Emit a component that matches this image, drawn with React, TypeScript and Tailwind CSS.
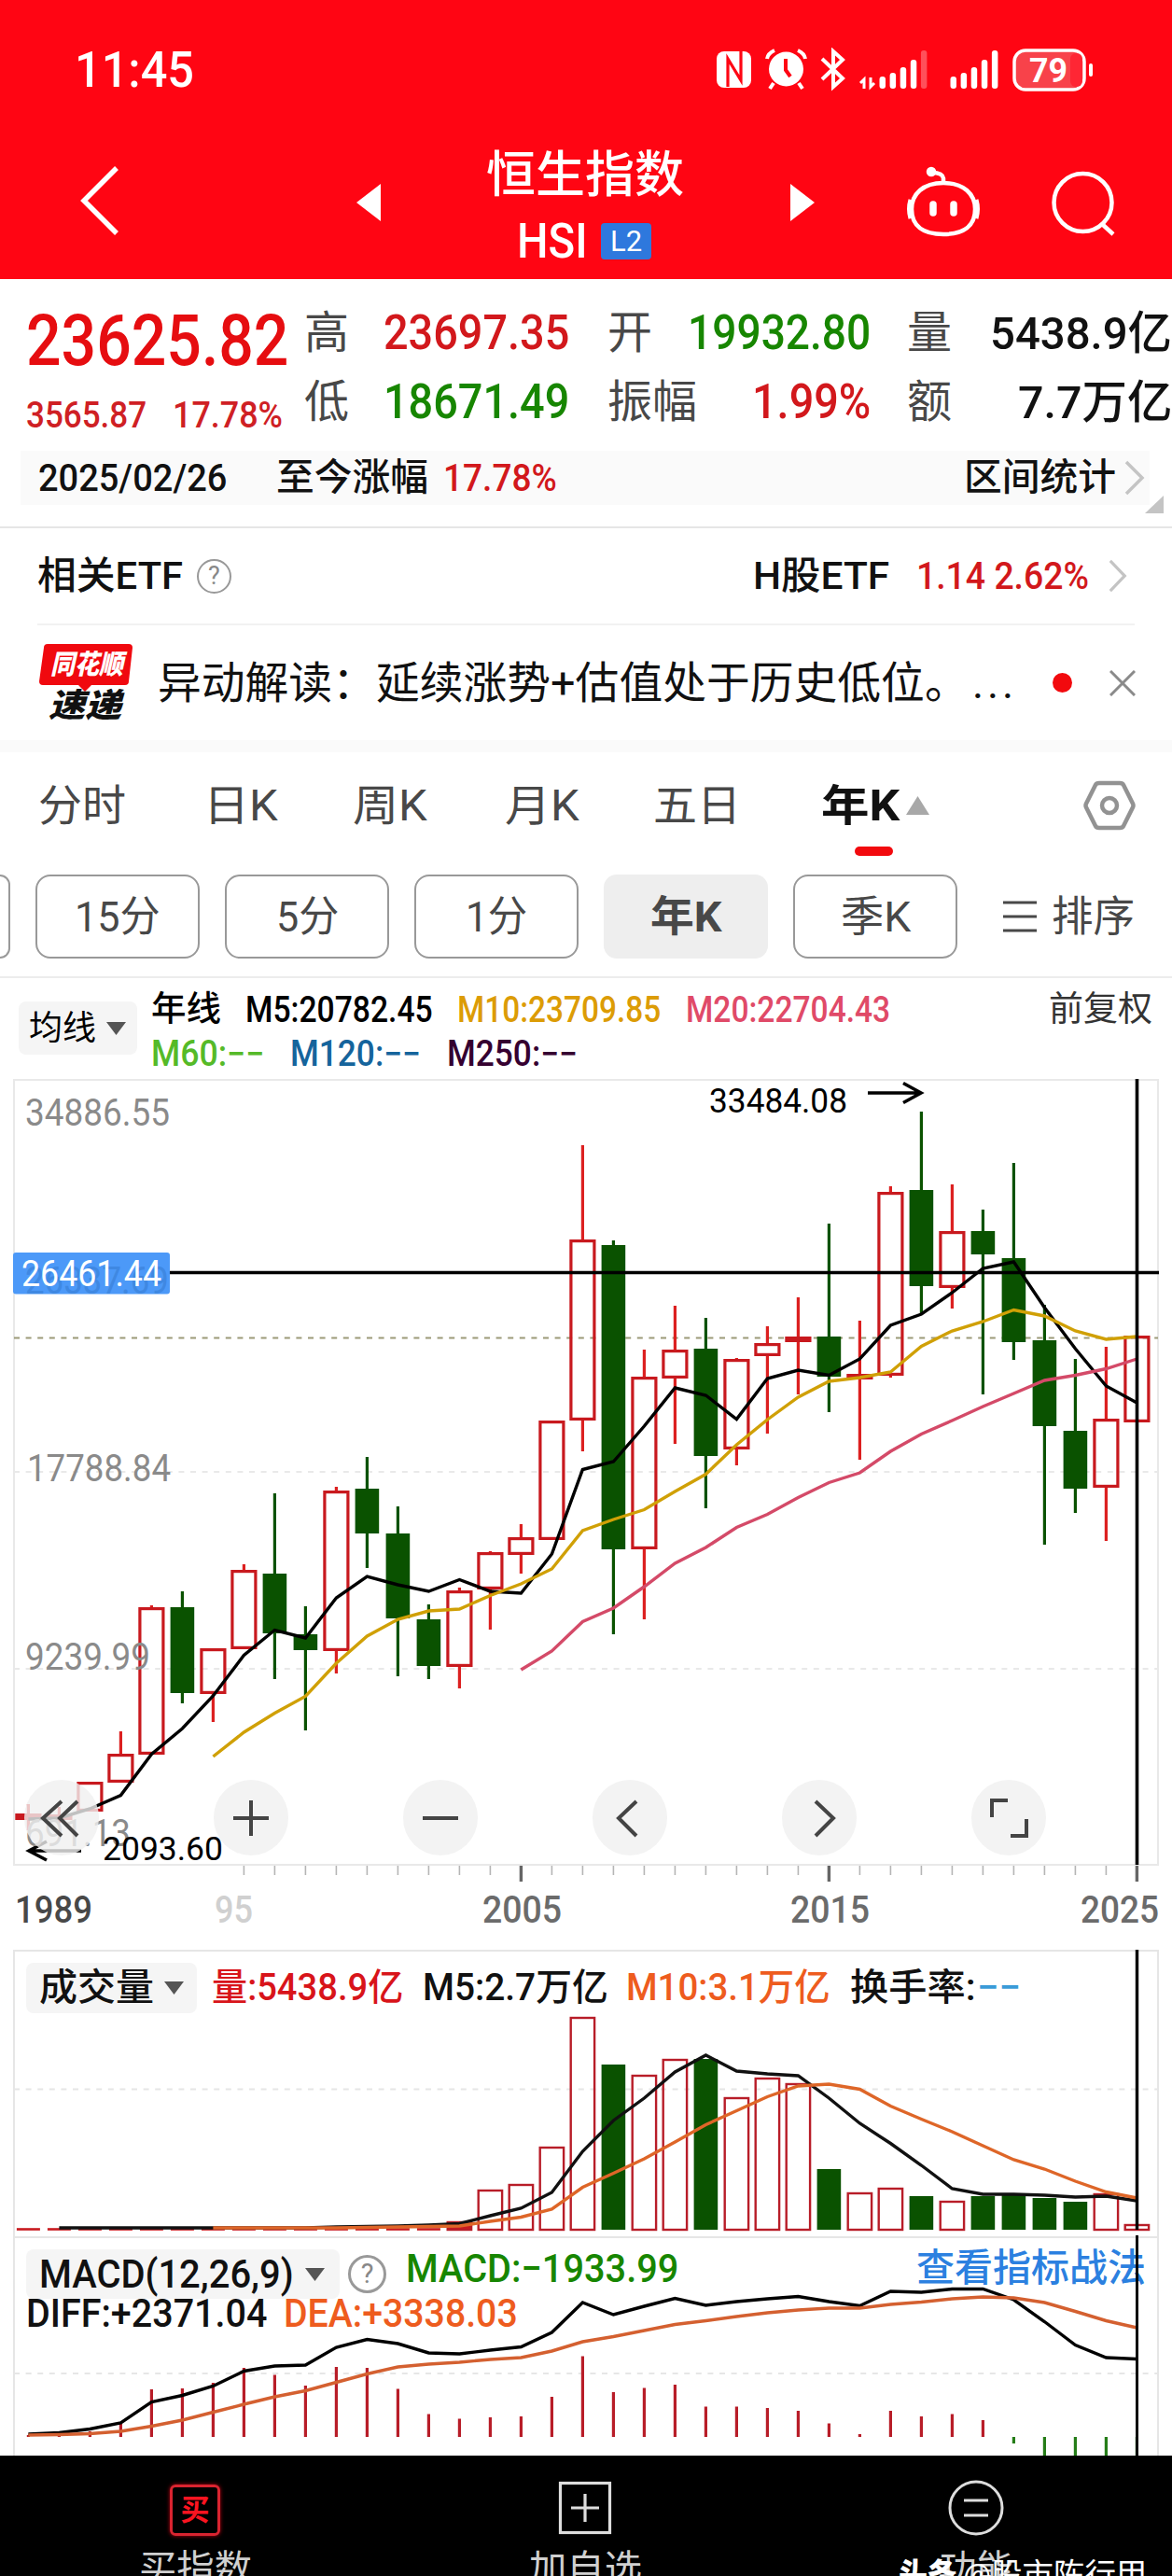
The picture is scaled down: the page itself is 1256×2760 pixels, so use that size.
import React, { useLayoutEffect, useRef, useState } from 'react';

// Texto ajustado a un ancho fijo (cifras estrechas)
const Fit: React.FC<{ w: number; className?: string; children: React.ReactNode }> = ({ w, className = '', children }) => {
  const ref = useRef<HTMLSpanElement>(null);
  const [scale, setScale] = useState(1);

  useLayoutEffect(() => {
    if (ref.current) setScale(w / ref.current.offsetWidth);
  }, [w, children]);

  return (
    <span className={`inline-block shrink-0 whitespace-nowrap leading-none ${className}`} style={{ width: w }}>
      <span ref={ref} className="inline-block origin-left" style={{ transform: `scaleX(${scale})` }}>
        {children}
      </span>
    </span>
  );
};

interface LabelProps {
  x: number;
  y: number;
  w: number;
  size: number;
  fill?: string;
  children: string;
}

// Texto dentro de los gráficos; y es el centro de las cifras
const Label: React.FC<LabelProps> = ({ x, y, w, size, fill = '#8a8a8a', children }) => (
  <text x={x} y={y + size * 0.356} fontSize={size} fill={fill} textLength={w} lengthAdjust="spacingAndGlyphs">
    {children}
  </text>
);

const RED = '#c8191e';
const GREEN = '#0a5200';

const cx = (i: number) => 30.4 + i * 33;
const line = (start: number, ys: number[]) => ys.map((y, i) => `${cx(start + i)},${y}`).join(' ');

// [alcista, máximo, techo, suelo, mínimo]
const candles: [number, number, number, number, number][] = [
  [1, 1933, 1943, 1950, 1961], [1, 1936, 1944, 1950, 1953], [1, 1909, 1909, 1941, 1941],
  [1, 1855, 1879, 1910, 1910], [1, 1720, 1722, 1880, 1880], [0, 1705, 1722, 1814, 1825],
  [1, 1766, 1766, 1815, 1845], [1, 1676, 1682, 1767, 1767], [0, 1600, 1686, 1750, 1799],
  [0, 1721, 1751, 1768, 1854], [1, 1593, 1597, 1769, 1793], [0, 1561, 1595, 1643, 1680],
  [0, 1614, 1643, 1734, 1796], [0, 1719, 1735, 1785, 1799], [1, 1701, 1704, 1786, 1809],
  [1, 1662, 1663, 1703, 1746], [1, 1633, 1647, 1666, 1686], [1, 1522, 1522, 1650, 1650],
  [1, 1227, 1328, 1522, 1555], [0, 1329, 1334, 1660, 1751], [1, 1446, 1475, 1660, 1735],
  [1, 1399, 1446, 1477, 1547], [0, 1412, 1445, 1560, 1616], [1, 1455, 1456, 1553, 1570],
  [1, 1421, 1439, 1453, 1536], [1, 1390, 1432, 1438, 1494], [0, 1311, 1432, 1475, 1513],
  [1, 1415, 1472, 1478, 1564], [1, 1271, 1277, 1474, 1476], [0, 1191, 1275, 1378, 1408],
  [1, 1269, 1319, 1380, 1402], [0, 1296, 1319, 1344, 1494], [0, 1246, 1348, 1438, 1457],
  [0, 1398, 1436, 1528, 1655], [0, 1456, 1533, 1595, 1621], [1, 1443, 1520, 1594, 1651],
  [1, 1431, 1431, 1524, 1524],
];

const m5 = [
  1949, 1948, 1938, 1923.5, 1879.5, 1852, 1817, 1773.5, 1746.5, 1755, 1712, 1689, 1698, 1705, 1692.5, 1705, 1707, 1665,
  1574.5, 1566, 1528, 1487, 1495, 1520.5, 1477, 1468, 1473.5, 1456, 1420, 1408, 1385, 1359, 1352, 1401, 1445, 1485, 1503,
];
const m10 = [
  1882, 1856, 1835.5, 1817.5, 1782, 1753, 1735, 1726, 1724, 1709.5, 1697, 1681, 1640, 1628, 1617.5, 1598, 1579.5, 1548, 1521,
  1497, 1480, 1476, 1470, 1442.5, 1426, 1416, 1403.5, 1410, 1426, 1435, 1432,
];
const m20 = [
  1789, 1769, 1737.5, 1723, 1700, 1675, 1658, 1636.5, 1622.5, 1604.5, 1588.5, 1578, 1555, 1536.5, 1522, 1507, 1493, 1479,
  1473.5, 1466.5, 1456,
];

// [alcista, altura]
const volumes: [number, number][] = [
  [1, 2380], [1, 2346], [1, 2340], [1, 2300], [1, 2161], [0, 2212], [1, 2223], [1, 2206], [0, 2206], [1, 2247],
  [1, 2226], [1, 2232], [0, 2324], [1, 2349], [1, 2344], [0, 2353], [1, 2358], [0, 2353], [0, 2352], [0, 2355],
  [0, 2359], [1, 2350], [1, 2383],
];
const vol5 = [
  2387, 2387, 2387, 2387, 2387, 2387, 2387, 2387, 2387, 2386, 2385.5, 2385, 2384, 2382.5, 2374, 2366, 2349, 2305, 2272,
  2248, 2220, 2202, 2219, 2222, 2224, 2248, 2275, 2296.5, 2320, 2345, 2351, 2351, 2352, 2354, 2353, 2358,
];
const vol10 = [
  2387, 2387, 2387, 2387, 2387, 2386.5, 2386, 2385.5, 2385, 2380, 2375.5, 2367, 2343.5, 2328.5, 2313, 2295, 2276.5, 2261.5,
  2246.5, 2235, 2233, 2238.5, 2256.5, 2270.5, 2284, 2299, 2314, 2324, 2337, 2348.5, 2355,
];

const macd = [
  2609, 2608, 2605, 2597, 2560, 2559, 2553, 2537, 2544.5, 2556, 2536, 2537, 2559.5, 2586.5, 2591.5, 2590, 2589, 2568, 2524.5,
  2563, 2558.5, 2555, 2578.5, 2578.5, 2580, 2583, 2596.5, 2608, 2583, 2589, 2586.5, 2593, 2618, 2640, 2640, 2640, 2640,
];
const diff = [
  2608, 2606.5, 2602.5, 2596, 2573.5, 2566.5, 2556.5, 2540.5, 2535, 2534, 2515, 2506.5, 2511, 2521, 2522, 2518, 2514.5, 2499,
  2467, 2480, 2471, 2462.5, 2470, 2466, 2463, 2460.5, 2466, 2470.5, 2455, 2456, 2452.5, 2452.5, 2464, 2487.5, 2512.5, 2526, 2527.5,
];
const dea = [
  2609, 2608.5, 2607.5, 2605, 2599.5, 2593, 2584.5, 2576, 2568, 2561.5, 2552.5, 2543.5, 2536, 2533, 2531, 2528, 2526, 2519,
  2509, 2503.5, 2497, 2490.5, 2486.5, 2482, 2478, 2475, 2473, 2473, 2469, 2466.5, 2463, 2461, 2462, 2467, 2476.5, 2486.5, 2494,
];

const StatusIcons = () => (
  <svg className="ml-auto mr-[82px] h-[48px] w-[408px]" viewBox="766 50 408 48" fill="#fff">
    {/* NFC */}
    <rect x="768" y="54" width="37" height="39" rx="8" />
    <path d="M780 92V62l14 23V54" fill="none" stroke="#ff0513" strokeWidth="3.200" />
    {/* alarma */}
    <circle cx="842.500" cy="73" r="18.500" />
    <path d="M822 62q1-6 8-9M863 62q-1-6-8-9M829 88l-4 6M856 88l4 6" stroke="#fff" strokeWidth="4" fill="none" />
    <path d="M842 62v12l5 7" stroke="#ff0513" strokeWidth="4" fill="none" />
    {/* bluetooth */}
    <path d="M881 62l22 21-10 9V54l10 9-22 21" fill="none" stroke="#fff" strokeWidth="4" />
    <path d="M926 94V84l-4 4M933 82v10l4-4" fill="none" stroke="#fff" strokeWidth="3" />
    {[0, 1].map((s) =>
      [81, 77, 71, 63, 53].map((y, i) => (
        <rect key={`${s}${i}`} x={942.5 + s * 76 + i * 11.1} y={y} width="6.5" height={94 - y} rx="3" opacity={s === 0 && i === 4 ? 0.3 : 1} />
      ))
    )}
    <rect x="1087" y="53" width="75" height="42" rx="12" fill="#f8424a" stroke="#fff" strokeWidth="3.500" />
    <rect x="1147" y="56" width="13" height="36" rx="6" fill="#ff2634" />
    <rect x="1167" y="67" width="4" height="14" rx="2" />
    <text x="1103" y="87" fontSize="37" fontWeight="700" textLength="41" lengthAdjust="spacingAndGlyphs">79</text>
  </svg>
);

const Header = () => (
  <header className="h-[299px] bg-[#ff0513] text-white">
    <div className="flex h-[150px] items-center pl-[80px]">
      <Fit w={128} className="text-[54px] font-medium">11:45</Fit>
      <StatusIcons />
    </div>
    <div className="flex h-[149px] items-start pl-[86px]">
      <svg className="mt-[27px] h-[76px] w-[44px]" viewBox="0 0 44 76" fill="none" stroke="#fff" strokeWidth="5.500">
        <path d="M39 3L4 38l35 35" />
      </svg>
      <svg className="ml-[252px] mt-[47px] h-[40px] w-[26px]" viewBox="0 0 26 40" fill="#fff">
        <path d="M26 0v40L0 20z" />
      </svg>
      <div className="ml-[112px] flex w-[214px] flex-col items-center">
        <Fit w={212} className="mt-[12px] text-[53px] font-medium">恒生指数</Fit>
        <div className="mt-[18px] flex w-[214px] items-center pl-[34px]">
          <Fit w={76} className="text-[51px] font-medium">HSI</Fit>
          <span className="ml-[14px] flex h-[39px] w-[54px] items-center justify-center rounded bg-[#2e78dd] text-[31px] leading-none">L2</span>
        </div>
      </div>
      <svg className="ml-[113px] mt-[47px] h-[40px] w-[26px]" viewBox="0 0 26 40" fill="#fff">
        <path d="M0 0v40l26-20z" />
      </svg>
      <svg className="ml-[97px] mt-[28px] h-[78px] w-[82px]" viewBox="970 178 82 78" fill="none" stroke="#fff" strokeWidth="4.500">
        <path d="M1011 196c-22 0-34 12-34 28 0 18 12 27 34 27s34-9 34-27c0-16-12-28-34-28z" />
        <path d="M1011 196v-5q-1-6-12-6" />
        <circle cx="998" cy="184" r="3" fill="#fff" />
        <path d="M976 214q-3 10 0 20M1046 214q3 10 0 20" strokeWidth="5" />
        <path d="M1000 219v9M1022 219v9" strokeWidth="7.500" strokeLinecap="round" />
      </svg>
      <svg className="ml-[74px] mt-[31px] h-[74px] w-[72px]" viewBox="1126 180 72 74" fill="none" stroke="#fff" strokeWidth="4.500">
        <circle cx="1160.500" cy="216" r="31" />
        <path d="M1181 239l12 11" />
      </svg>
    </div>
  </header>
);

interface CellProps {
  label: string;
  value: string;
  w: number;
  color: string;
}

const Cell: React.FC<CellProps> = ({ label, value, w, color }) => (
  <div className="flex h-[74px] items-center justify-between">
    <span className="text-[48px] leading-none text-[#484848]">{label}</span>
    <Fit w={w} className={`font-medium ${color}`}>{value}</Fit>
  </div>
);

const Quote = () => (
  <section className="flex h-[184px]">
    <div className="w-[326px] pl-[28px]">
      <div className="flex h-[132px] items-center">
        <Fit w={281} className="text-[76px] font-medium text-[#e60d10]">23625.82</Fit>
      </div>
      <div className="flex h-[28px] items-center text-[38px] font-medium text-[#cf2024]">
        <Fit w={129}>3565.87</Fit>
        <Fit w={118} className="ml-[28px]">17.78%</Fit>
      </div>
    </div>
    <div className="w-[284px] pt-[21px] text-[52px]">
      <Cell label="高" value="23697.35" w={199} color="text-[#d2181c]" />
      <Cell label="低" value="18671.49" w={199} color="text-[#178600]" />
    </div>
    <div className="ml-[41px] w-[282px] pt-[21px] text-[52px]">
      <Cell label="开" value="19932.80" w={196} color="text-[#178600]" />
      <Cell label="振幅" value="1.99%" w={127} color="text-[#d2181c]" />
    </div>
    <div className="ml-[39px] w-[284px] pt-[21px] text-[49px]">
      <Cell label="量" value="5438.9亿" w={195} color="text-[#111]" />
      <Cell label="额" value="7.7万亿" w={165} color="text-[#111]" />
    </div>
  </section>
);

const Chevron = ({ className }: { className: string }) => (
  <svg className={className} viewBox="0 0 22 38" fill="none" stroke="#c4c4c4" strokeWidth="3.500" preserveAspectRatio="none">
    <path d="M2 2l17 17L2 36" />
  </svg>
);

const Help = ({ className }: { className: string }) => (
  <span className={`flex items-center justify-center rounded-full border-[#999] leading-none text-[#888] ${className}`}>?</span>
);

const Info = () => (
  <>
    <section className="relative flex h-[83px] items-start border-b-2 border-[#e6e6e6]">
      <div className="ml-[22px] flex h-[58px] w-[1210px] items-center bg-[#fafafa] pl-[19px] text-[#111]">
        <Fit w={202} className="text-[41px] font-medium">2025/02/26</Fit>
        <Fit w={163} className="ml-[53px] text-[40px] font-medium">至今涨幅</Fit>
        <Fit w={122} className="ml-[16px] text-[41px] font-medium text-[#d2181c]">17.78%</Fit>
        <Fit w={163} className="ml-auto text-[40px] font-medium">区间统计</Fit>
        <Chevron className="ml-[9px] mr-[5px] h-[38px] w-[22px]" />
      </div>
      <svg className="absolute right-[9px] top-[48px] h-[19px] w-[20px]" viewBox="0 0 20 19" fill="#c4c4c4">
        <path d="M20 0v19H0z" />
      </svg>
    </section>
    <section className="mx-[40px] flex h-[104px] items-center border-b-2 border-[#f2f2f2] font-medium text-[#111]">
      <Fit w={156} className="text-[41px]">相关ETF</Fit>
      <Help className="ml-[15px] h-[37px] w-[37px] border-2 text-[27px] font-normal" />
      <Fit w={146} className="ml-auto text-[41px]">H股ETF</Fit>
      <Fit w={185} className="ml-[29px] text-[41px] text-[#d2181c]">1.14 2.62%</Fit>
      <Chevron className="ml-[21px] mr-[8px] h-[36px] w-[20px]" />
    </section>
    <section className="flex h-[123px] items-center pl-[42px]">
      <div className="relative h-[84px] w-[100px]">
        <svg className="absolute inset-0" viewBox="0 0 100 84" fill="#f0090f">
          <path d="M9 0h87q4 0 4 4l-4 36q0 4-4 4H56l-7 7-7-7H4q-4 0-4-4L5 4q0-4 4-4z" />
        </svg>
        <Fit w={78} className="absolute left-[12px] top-[8px] text-[29px] font-black italic text-white">同花顺</Fit>
        <Fit w={78} className="absolute left-[10px] top-[49px] text-[35px] font-black italic text-[#111]">速递</Fit>
      </div>
      <Fit w={869} className="ml-[27px] text-[47px] text-[#111]">异动解读：延续涨势+估值处于历史低位。</Fit>
      <Fit w={48} className="ml-[4px] text-[47px] tracking-[4px] text-[#111]">...</Fit>
      <span className="ml-[38px] h-[21px] w-[21px] rounded-full bg-[#f20a0e]" />
      <svg className="ml-[40px] h-[28px] w-[28px]" viewBox="0 0 28 28" stroke="#8a8a8a" strokeWidth="3">
        <path d="M1 1l26 26M27 1L1 27" />
      </svg>
    </section>
    <div className="h-[13px] bg-[#fafafa]" />
  </>
);

const Pill = ({ w, text }: { w: number; text: string }) => (
  <div className="ml-[27px] flex h-[90px] w-[176px] items-center justify-center rounded-[16px] border-2 border-[#999]">
    <Fit w={w}>{text}</Fit>
  </div>
);

const Tabs = () => (
  <>
    <nav className="flex h-[114px] items-center pl-[41px] text-[46px] text-[#484848]">
      <Fit w={94}>分时</Fit>
      <Fit w={80} className="ml-[83px]">日K</Fit>
      <Fit w={80} className="ml-[80px]">周K</Fit>
      <Fit w={80} className="ml-[83px]">月K</Fit>
      <Fit w={94} className="ml-[79px]">五日</Fit>
      <div className="relative ml-[86px] flex h-full items-center">
        <Fit w={84} className="font-bold text-[#111]">年K</Fit>
        <svg className="ml-[7px] h-[20px] w-[25px]" viewBox="0 0 25 20" fill="#a8a8a8">
          <path d="M12.500 0L25 20H0z" />
        </svg>
        <span className="absolute bottom-[3px] left-[36px] h-[10px] w-[41px] rounded-full bg-[#f20a0e]" />
      </div>
      <svg className="ml-[165px] h-[54px] w-[56px]" viewBox="0 0 56 54" fill="none" stroke="#929292" strokeWidth="4.500">
        <path d="M17 3h22q3 0 4 2l10 20q1 2 0 4L43 49q-1 2-4 2H17q-3 0-4-2L3 29q-1-2 0-4L13 5q1-2 4-2z" />
        <circle cx="28" cy="27" r="8" />
      </svg>
    </nav>
    <div className="flex h-[128px] items-center border-b-2 border-[#ececec] pb-[2px] text-[45px] text-[#484848]">
      <div className="h-[90px] w-[11px] rounded-r-[14px] border-2 border-l-0 border-[#999]" />
      <Pill w={92} text="15分" />
      <Pill w={67} text="5分" />
      <Pill w={66} text="1分" />
      <div className="ml-[27px] flex h-[90px] w-[176px] items-center justify-center rounded-[14px] bg-[#eee] font-bold">
        <Fit w={77}>年K</Fit>
      </div>
      <Pill w={75} text="季K" />
      <svg className="ml-[49px] h-[34px] w-[36px]" viewBox="0 0 36 34" stroke="#484848" strokeWidth="3">
        <path d="M0 2h36M0 17h36M0 32h36" />
      </svg>
      <Fit w={89} className="ml-[16px]">排序</Fit>
    </div>
  </>
);

const Caret = ({ className }: { className: string }) => (
  <svg className={`h-[14px] w-[21px] ${className}`} viewBox="0 0 21 14" fill="#555">
    <path d="M0 0h21L10.500 14z" />
  </svg>
);

const Legend = () => (
  <div className="flex h-[108px] items-start pl-[20px] text-[38px] font-medium">
    <div className="mt-[25px] flex h-[57px] w-[127px] items-center rounded-lg bg-[#f5f5f5] pl-[11px]">
      <Fit w={72} className="text-[36px] font-normal">均线</Fit>
      <Caret className="ml-[11px]" />
    </div>
    <div className="ml-[15px]">
      <div className="mt-[10px] flex h-[47px] items-center">
        <Fit w={75} className="text-[37px]">年线</Fit>
        <Fit w={201} className="ml-[26px]">M5:20782.45</Fit>
        <Fit w={218} className="ml-[26px] text-[#dc9c05]">M10:23709.85</Fit>
        <Fit w={219} className="ml-[27px] text-[#e04a68]">M20:22704.43</Fit>
        <Fit w={111} className="ml-[170px] text-[37px] font-normal text-[#333]">前复权</Fit>
      </div>
      <div className="flex h-[47px] items-center">
        <Fit w={121} className="text-[#55ba28]">M60:−−</Fit>
        <Fit w={140} className="ml-[28px] text-[#15649c]">M120:−−</Fit>
        <Fit w={140} className="ml-[28px] text-[#350030]">M250:−−</Fit>
      </div>
    </div>
  </div>
);

const Zoom = ({ d }: { d: string }) => (
  <button className="h-[81px] w-[80px] rounded-full bg-[#f0f0f0]/80">
    <svg className="h-[80px] w-[80px]" viewBox="0 0 80 80" fill="none" stroke="#444" strokeWidth="4">
      <path d={d} />
    </svg>
  </button>
);

const KChart = () => (
  <section className="relative h-[933px]">
    <svg className="block h-[933px] w-[1256px]" viewBox="0 1156 1256 933">
      <g fill="none" stroke="#e9e9e9" strokeWidth="2">
        <rect x="15" y="1157" width="1226" height="841" />
        <path d="M15 1577h1226M15 1788h1226" strokeDasharray="6 6.600" />
      </g>
      <path d="M15 1433.500h1226" stroke="#9c9a78" strokeWidth="2" strokeDasharray="6 6.600" />
      {candles.map(([up, high, top, bottom, low], i) => (
        <g key={i} stroke={up ? RED : GREEN} strokeWidth="3.200">
          <path d={`M${cx(i)} ${high}V${top}M${cx(i)} ${bottom}V${low}`} stroke={up ? '#dc2020' : GREEN} />
          {up ? (
            <rect x={cx(i) - 12.5} y={top + 1.6} width="25" height={Math.max(bottom - top - 3.2, 1)} fill={bottom - top < 8 ? RED : 'none'} />
          ) : (
            <rect x={cx(i) - 12.8} y={top} width="25.6" height={bottom - top} fill={GREEN} stroke="none" />
          )}
        </g>
      ))}
      <g fill="none" strokeWidth="3.400">
        <polyline points={line(0, m5)} stroke="#000" />
        <polyline points={line(6, m10)} stroke="#d0a006" />
        <polyline points={line(16, m20)} stroke="#d44a68" />
        <path d="M182 1363.500h1060M1218.500 1156v842" stroke="#000" strokeWidth="3.600" />
        <path d="M930 1171h57M968 1160.500l19 10.500-19 10.500M87 1983H31M50 1973l-19 10 19 10" stroke="#000" strokeWidth="3.600" />
      </g>
      <g fontWeight="400">
        <Label x={27} y={1191} w={155} size={41}>34886.55</Label>
        <Label x={29} y={1572.500} w={154} size={41}>17788.84</Label>
        <Label x={27} y={1774.500} w={134} size={41}>9239.99</Label>
        <Label x={27} y={1963.500} w={113} size={41}>691.13</Label>
        <Label x={110} y={1980.500} w={129} size={35} fill="#000">2093.60</Label>
        <Label x={760} y={1179.500} w={148} size={36} fill="#000">33484.08</Label>
        <rect x="14" y="1342" width="168" height="44.500" rx="3" fill="#4c99f8" />
        <Label x={27} y={1372} w={154} size={40} fill="#3f88e2">26337.69</Label>
        <Label x={23} y={1364} w={150} size={38} fill="#fff">26461.44</Label>
      </g>
      {Array.from({ length: 30 }, (_, i) => i + 7).map((i) => (
        <path key={i} d={`M${cx(i)} 1999v${i % 10 === 6 ? 17 : 10}`} stroke={i % 10 === 6 ? '#666' : '#b5b5b5'} strokeWidth={i % 10 === 6 ? 3.4 : 1.6} />
      ))}
      <g fontWeight="500">
        <Label x={16} y={2045} w={83} size={41} fill="#484848">1989</Label>
        <Label x={230} y={2045} w={41} size={41} fill="#d0d0d0">95</Label>
        <Label x={517} y={2045} w={85} size={41} fill="#6b6b6b">2005</Label>
        <Label x={847} y={2045} w={85} size={41} fill="#6b6b6b">2015</Label>
        <Label x={1158} y={2045} w={84} size={41} fill="#6b6b6b">2025</Label>
      </g>
    </svg>
    <div className="absolute left-[26px] top-[751px] flex gap-[123px]">
      <Zoom d="M40 22L20 40l20 19M57 22L38 40l19 19" />
      <Zoom d="M21 40h38M40 21v38" />
      <Zoom d="M21 40h38" />
      <Zoom d="M47 22L28 40l19 19" />
      <Zoom d="M36 22l19 18-19 19" />
      <Zoom d="M39 21H22v18M42 59h17V41" />
    </div>
  </section>
);

const Volume = () => (
  <section className="relative h-[307px]">
    <svg className="block h-[307px] w-[1256px]" viewBox="0 2089 1256 307">
      <g fill="none" stroke="#e6e6e6" strokeWidth="2">
        <rect x="15" y="2090" width="1226" height="310" />
        <path d="M15 2238.500h1226" strokeDasharray="6 6.600" />
      </g>
      {Array.from({ length: 14 }, (_, i) => (
        <path key={i} d={`M${cx(i) - 12.5} 2388.500h25`} stroke={RED} strokeWidth="2.600" />
      ))}
      {volumes.map(([up, y], i) => (
        <rect
          key={i}
          x={cx(i + 14) - (up ? 12.7 : 12.8)}
          y={up ? y + 1 : y}
          width={up ? 25.4 : 25.6}
          height={up ? 2388 - y : 2389 - y}
          fill={up ? (y === 2380 ? RED : 'none') : GREEN}
          stroke={up ? '#b81d28' : 'none'}
          strokeWidth="2.400"
        />
      ))}
      <g fill="none" strokeWidth="3.400">
        <polyline points={line(1, vol5)} stroke="#111" />
        <polyline points={line(6, vol10)} stroke="#de6628" />
        <path d="M1218.500 2088v301" stroke="#000" />
      </g>
    </svg>
    <div className="absolute left-[28px] top-[14px] flex h-[54px] items-center text-[40px] font-medium text-[#111]">
      <div className="flex h-full w-[183px] items-center rounded-lg bg-[#f5f5f5] pl-[14px]">
        <Fit w={123}>成交量</Fit>
        <Caret className="ml-[11px]" />
      </div>
      <Fit w={205} className="ml-[16px] text-[#d8141a]">量:5438.9亿</Fit>
      <Fit w={199} className="ml-[21px]">M5:2.7万亿</Fit>
      <Fit w={219} className="ml-[19px] text-[#ee5c1e]">M10:3.1万亿</Fit>
      <Fit w={135} className="ml-[21px]">换手率:</Fit>
      <Fit w={47} className="ml-[1px] text-[#3a9bd8]">−−</Fit>
    </div>
  </section>
);

const Macd = () => (
  <section className="relative h-[235px]">
    <svg className="block h-[235px] w-[1256px]" viewBox="0 2396 1256 235">
      <g fill="none" stroke="#e6e6e6" strokeWidth="2">
        <rect x="15" y="2397" width="1226" height="250" />
        <path d="M15 2543h1226" strokeDasharray="6 6.600" />
      </g>
      {macd.map((y, i) => (
        <path key={i} d={`M${cx(i)} 2611V${y}`} stroke={y > 2611 ? '#257d18' : '#b81d28'} strokeWidth="3.200" />
      ))}
      <g fill="none" strokeWidth="3.400">
        <polyline points={line(0, diff)} stroke="#000" />
        <polyline points={line(0, dea)} stroke="#d46030" />
      </g>
    </svg>
    <div className="absolute left-[28px] top-[14px] flex h-[53px] w-[1200px] items-center text-[43px] font-medium text-[#111]">
      <div className="flex h-full w-[336px] items-center rounded-lg bg-[#f5f5f5] pl-[14px]">
        <Fit w={273}>MACD(12,26,9)</Fit>
        <Caret className="ml-[12px]" />
      </div>
      <Help className="ml-[9px] h-[41px] w-[41px] border-[3px] text-[29px] font-normal" />
      <Fit w={292} className="-mt-[12px] ml-[21px] text-[#178600]">MACD:−1933.99</Fit>
      <Fit w={246} className="-mt-[12px] ml-[255px] text-[41px] text-[#2b80e0]">查看指标战法</Fit>
    </div>
    <div className="absolute left-[28px] top-[61px] flex h-[42px] items-center text-[43px] font-medium text-[#111]">
      <Fit w={258}>DIFF:+2371.04</Fit>
      <Fit w={251} className="ml-[18px] text-[#ee5c1e]">DEA:+3338.03</Fit>
    </div>
    <span className="absolute left-[1217px] top-[-1px] h-[236px] w-[3px] bg-black" />
  </section>
);

const Footer = () => (
  <footer className="relative flex h-[129px] bg-black text-[40px] text-[#d0d0d0]">
    <div className="flex w-[418px] flex-col items-center pt-[31px]">
      <span className="flex h-[55px] w-[54px] shrink-0 items-center justify-center rounded-md border-[3px] border-[#d92430] text-[31px] font-bold leading-none text-[#fb1420] shadow-[0_0_4px_#b00010]">买</span>
      <Fit w={121} className="mt-[16px]">买指数</Fit>
    </div>
    <div className="flex w-[418px] flex-col items-center pt-[27px]">
      <svg className="h-[58px] w-[58px] shrink-0" viewBox="0 0 58 58" fill="none" stroke="#ddd" strokeWidth="3.200">
        <rect x="2.500" y="2.500" width="53" height="53" />
        <path d="M14 29h30M29 14v30" />
      </svg>
      <Fit w={121} className="mt-[17px]">加自选</Fit>
    </div>
    <div className="flex w-[420px] flex-col items-center pt-[26px]">
      <svg className="h-[60px] w-[60px] shrink-0" viewBox="0 0 60 60" fill="none" stroke="#ddd" strokeWidth="3">
        <circle cx="30" cy="30" r="28" />
        <path d="M17 22h26M17 38h26" />
      </svg>
      <Fit w={79} className="mt-[16px]">功能</Fit>
    </div>
    <div className="absolute left-[963px] top-[111px] flex text-[34px] text-white">
      <Fit w={62} className="font-black">头条</Fit>
      <Fit w={198} className="ml-[7px]">@股市陈行甲</Fit>
    </div>
  </footer>
);

const App: React.FC = () => {
  return (
    <div className="h-[2760px] w-[1256px] overflow-hidden bg-white font-['Roboto','Noto_Sans_CJK_SC',sans-serif] text-black">
      <Header />
      <Quote />
      <Info />
      <Tabs />
      <Legend />
      <KChart />
      <Volume />
      <Macd />
      <Footer />
    </div>
  );
};

export default App;
